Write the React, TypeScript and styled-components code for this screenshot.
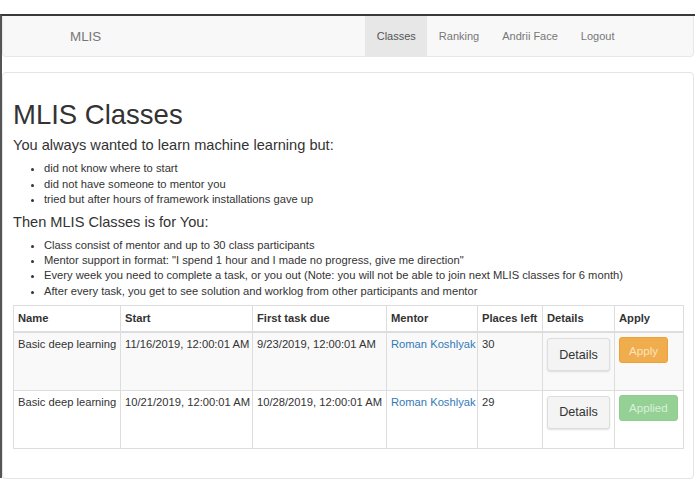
import React from 'react';
import styled, { createGlobalStyle } from 'styled-components';

const GlobalStyle = createGlobalStyle`
  html, body {
    margin: 0;
    padding: 0;
    background: #fff;
  }
  body {
    font-family: "Liberation Sans", Arial, sans-serif;
    color: #333;
  }
`;

type ClassRow = {
  name: string;
  start: string;
  due: string;
  mentor: string;
  places: number;
  applied: boolean;
};

const rows: ClassRow[] = [
  {
    name: 'Basic deep learning',
    start: '11/16/2019, 12:00:01 AM',
    due: '9/23/2019, 12:00:01 AM',
    mentor: 'Roman Koshlyak',
    places: 30,
    applied: false,
  },
  {
    name: 'Basic deep learning',
    start: '10/21/2019, 12:00:01 AM',
    due: '10/28/2019, 12:00:01 AM',
    mentor: 'Roman Koshlyak',
    places: 29,
    applied: true,
  },
];

const App: React.FC = () => {
  return (
    <>
      <GlobalStyle />
      <Page>
        <Window>
          <Navbar>
            <NavContainer>
              <Brand>MLIS</Brand>
              <NavList>
                <NavItem active>Classes</NavItem>
                <NavItem>Ranking</NavItem>
                <NavItem>Andrii Face</NavItem>
                <NavItem>Logout</NavItem>
              </NavList>
            </NavContainer>
          </Navbar>

          <Panel>
            <Title>MLIS Classes</Title>
            <Subtitle>You always wanted to learn machine learning but:</Subtitle>
            <List>
              <li>did not know where to start</li>
              <li>did not have someone to mentor you</li>
              <li>tried but after hours of framework installations gave up</li>
            </List>
            <Subtitle>Then MLIS Classes is for You:</Subtitle>
            <List>
              <li>Class consist of mentor and up to 30 class participants</li>
              <li>Mentor support in format: "I spend 1 hour and I made no progress, give me direction"</li>
              <li>Every week you need to complete a task, or you out (Note: you will not be able to join next MLIS classes for 6 month)</li>
              <li>After every task, you get to see solution and worklog from other participants and mentor</li>
            </List>

            <Table>
              <colgroup>
                <col style={{ width: 107 }} />
                <col style={{ width: 132 }} />
                <col style={{ width: 134 }} />
                <col style={{ width: 91 }} />
                <col style={{ width: 65 }} />
                <col style={{ width: 72 }} />
                <col style={{ width: 69 }} />
              </colgroup>
              <thead>
                <tr>
                  <Th>Name</Th>
                  <Th>Start</Th>
                  <Th>First task due</Th>
                  <Th>Mentor</Th>
                  <Th>Places left</Th>
                  <Th>Details</Th>
                  <Th>Apply</Th>
                </tr>
              </thead>
              <tbody>
                {rows.map((row, i) => (
                  <Tr key={i} striped={i % 2 === 0}>
                    <Td>{row.name}</Td>
                    <Td>{row.start}</Td>
                    <Td>{row.due}</Td>
                    <Td>
                      <MentorLink href="#">{row.mentor}</MentorLink>
                    </Td>
                    <Td>{row.places}</Td>
                    <Td>
                      <DetailsButton>Details</DetailsButton>
                    </Td>
                    <Td>
                      {row.applied ? (
                        <ApplyButton variant="applied" disabled>Applied</ApplyButton>
                      ) : (
                        <ApplyButton variant="apply">Apply</ApplyButton>
                      )}
                    </Td>
                  </Tr>
                ))}
              </tbody>
            </Table>
          </Panel>
        </Window>
      </Page>
    </>
  );
};

const Page = styled.div`
  padding-top: 14px;
  width: 695px;
  height: 494px;
  box-sizing: border-box;
  overflow: hidden;
`;

const Window = styled.div`
  border-top: 2px solid #3a3a3a;
  border-left: 2px solid #555;
  height: 464px;
  box-sizing: border-box;
`;

const Navbar = styled.nav`
  height: 41px;
  box-sizing: border-box;
  background: #f8f8f8;
  border: 1px solid #e7e7e7;
  border-top: none;
  border-radius: 0 0 4px 4px;
  margin-right: 1px;
`;

const NavContainer = styled.div`
  display: flex;
  justify-content: space-between;
  align-items: stretch;
  height: 100%;
  padding: 0 67px 0 56px;
`;

const Brand = styled.a`
  display: flex;
  align-items: center;
  padding: 0 11px;
  font-size: 13.4px;
  color: #777;
  text-decoration: none;
`;

const NavList = styled.ul`
  display: flex;
  margin: 0;
  padding: 0;
  list-style: none;
`;

const NavItem = styled.li<{ active?: boolean }>`
  display: flex;
  align-items: center;
  padding: 0 11.5px;
  font-size: 11px;
  color: ${(p) => (p.active ? '#555' : '#777')};
  background: ${(p) => (p.active ? '#e7e7e7' : 'transparent')};
`;

const Panel = styled.div`
  margin: 15px 1px 0 0;
  border: 1px solid #e4e4e4;
  border-radius: 4px;
  padding: 27px 10px 29px 10px;
`;

const Title = styled.h1`
  margin: 0;
  font-size: 27.5px;
  line-height: 1.1;
  font-weight: 400;
  color: #333;
`;

const Subtitle = styled.h3`
  margin: 7px 0 0;
  font-size: 14.6px;
  line-height: 1.1;
  font-weight: 400;
  color: #333;
`;

const List = styled.ul`
  margin: 8px 0 0;
  padding-left: 31px;
  font-size: 11.2px;
  line-height: 15.4px;
  color: #333;

  & + ${Subtitle} {
    margin-top: 6px;
  }
`;

const Table = styled.table`
  width: 670px;
  margin-top: 6px;
  border-collapse: collapse;
  table-layout: fixed;
  border: 1px solid #ddd;
  font-size: 11.2px;
  line-height: 15px;
  color: #333;
`;

const Th = styled.th`
  text-align: left;
  font-weight: 700;
  padding: 5px 4px;
  border: 1px solid #ddd;
  border-bottom-width: 2px;
  white-space: nowrap;
`;

const Tr = styled.tr<{ striped: boolean }>`
  background: ${(p) => (p.striped ? '#f9f9f9' : '#fff')};
  height: 58px;
`;

const Td = styled.td`
  vertical-align: top;
  padding: 4px 3px 5px 4px;
  border: 1px solid #ddd;
  white-space: nowrap;
`;

const MentorLink = styled.a`
  color: #337ab7;
  text-decoration: none;
`;

const DetailsButton = styled.button`
  display: block;
  width: 63px;
  height: 33px;
  margin: 1px 0 0;
  padding: 0;
  font-family: "Liberation Sans", Arial, sans-serif;
  font-size: 12.6px;
  color: #333;
  background: #f4f4f4;
  border: 1px solid #ddd;
  border-radius: 3px;
  box-shadow: 0 1px 2px rgba(0, 0, 0, 0.12);
`;

const ApplyButton = styled.button<{ variant: 'apply' | 'applied' }>`
  display: block;
  height: 26px;
  margin: 0;
  padding: 0 9px;
  font-family: "Liberation Sans", Arial, sans-serif;
  font-size: 11.6px;
  border-radius: 3px;
  border: 1px solid ${(p) => (p.variant === 'apply' ? '#eea236' : '#8fce8f')};
  background: ${(p) => (p.variant === 'apply' ? '#f0ad4e' : '#95d195')};
  color: ${(p) => (p.variant === 'apply' ? '#fde3bd' : '#d9f0d9')};
`;

export default App;
